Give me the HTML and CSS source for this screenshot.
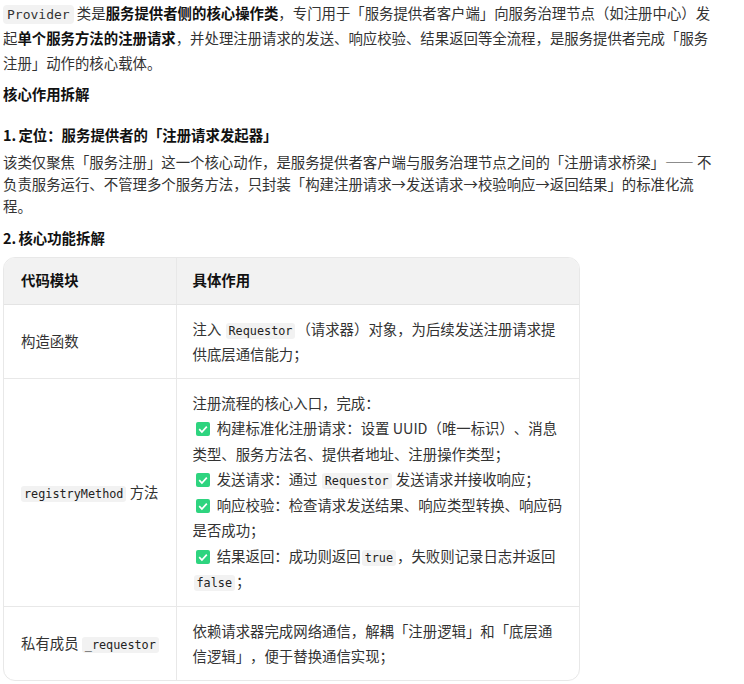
FILE: index.html
```html
<!DOCTYPE html>
<html lang="zh-CN">
<head>
<meta charset="utf-8">
<title>Provider</title>
<link rel="stylesheet" href="styles.css">
</head>
<body>
<main class="doc">
<p class="para"><code class="code-top">Provider</code> 类是<strong>服务提供者侧的核心操作类</strong>，专门用于「服务提供者客户端」向服务治理节点（如注册中心）发起<strong>单个服务方法的注册请求</strong>，并处理注册请求的发送、响应校验、结果返回等全流程，是服务提供者完成「服务注册」动作的核心载体。</p>
<h3 class="title">核心作用拆解</h3>
<h4 class="sub first">1. 定位：服务提供者的「注册请求发起器」</h4>
<p class="para tight">该类仅聚焦「服务注册」这一个核心动作，是服务提供者客户端与服务治理节点之间的「注册请求桥梁」—— 不负责服务运行、不管理多个服务方法，只封装「构建注册请求→发送请求→校验响应→返回结果」的标准化流程。</p>
<h4 class="sub second">2. 核心功能拆解</h4>
<div class="table-wrap">
<table class="table">
<thead>
<tr><th class="col-a">代码模块</th><th class="col-b">具体作用</th></tr>
</thead>
<tbody>
<tr>
<td>构造函数</td>
<td>注入 <code>Requestor</code>（请求器）对象，为后续发送注册请求提供底层通信能力；</td>
</tr>
<tr class="tall">
<td><code>registryMethod</code> 方法</td>
<td>注册流程的核心入口，完成：<br>
<svg class="check" viewBox="0 0 14 14"><rect width="14" height="14" rx="2" fill="#2ed47f"/><path d="M3.2 7.2 5.9 10 10.8 4.6" fill="none" stroke="#fff" stroke-width="1.7"/></svg> 构建标准化注册请求：设置 UUID（唯一标识）、消息类型、服务方法名、提供者地址、注册操作类型；<br>
<svg class="check" viewBox="0 0 14 14"><rect width="14" height="14" rx="2" fill="#2ed47f"/><path d="M3.2 7.2 5.9 10 10.8 4.6" fill="none" stroke="#fff" stroke-width="1.7"/></svg> 发送请求：通过 <code>Requestor</code> 发送请求并接收响应；<br>
<svg class="check" viewBox="0 0 14 14"><rect width="14" height="14" rx="2" fill="#2ed47f"/><path d="M3.2 7.2 5.9 10 10.8 4.6" fill="none" stroke="#fff" stroke-width="1.7"/></svg> 响应校验：检查请求发送结果、响应类型转换、响应码是否成功；<br>
<svg class="check" viewBox="0 0 14 14"><rect width="14" height="14" rx="2" fill="#2ed47f"/><path d="M3.2 7.2 5.9 10 10.8 4.6" fill="none" stroke="#fff" stroke-width="1.7"/></svg> 结果返回：成功则返回<code>true</code>，失败则记录日志并返回 <code>false</code>；</td>
</tr>
<tr>
<td>私有成员 <code>_requestor</code></td>
<td>依赖请求器完成网络通信，解耦「注册逻辑」和「底层通信逻辑」，便于替换通信实现；</td>
</tr>
</tbody>
</table>
</div>
</main>
</body>
</html>
```
FILE: styles.css
```css
* { box-sizing: border-box; }
html, body { margin: 0; background: #fff; overflow: hidden; }
body {
  font-family: "Noto Sans CJK SC", "Noto Sans", sans-serif;
  font-size: 14.4px;
  line-height: 25px;
  color: #333;
  text-spacing-trim: space-all;
}
.doc { width: 716px; padding: 0 0 0 3px; }
.para { margin: 0; }
.para.tight { line-height: 22px; }
.title {
  margin: 6px 0 0;
  font-size: 14.4px;
  line-height: 25px;
  font-weight: 700;
  color: #111;
}
.sub {
  margin: 0;
  font-size: 14.4px;
  line-height: 25px;
  font-weight: 700;
  color: #111;
  word-spacing: -1px;
}
.sub.first { margin-top: 16px; margin-bottom: 4px; }
.sub.second { margin-top: 8px; margin-bottom: 7px; }
strong { font-weight: 700; color: #111; }
code {
  font-family: "DejaVu Sans Mono", monospace;
  font-size: 11.8px;
  line-height: 1;
  color: #222;
  background: #f2f2f2;
  border-radius: 3px;
  padding: 1px 3px;
  margin: 0 1px;
}
.code-top { font-size: 13px; padding: 2px 4px; margin: 0; border-radius: 4px; color: #333; }
.table-wrap {
  width: 577px;
  border: 1px solid #e8e8e8;
  border-radius: 12px;
  overflow: hidden;
}
.table { width: 100%; border-collapse: collapse; table-layout: fixed; }
.col-a { width: 172px; }
th {
  background: #f2f2f2;
  height: 46px;
  padding: 0 16px 2px;
  text-align: left;
  font-weight: 700;
  color: #111;
  border-bottom: 1px solid #e4e4e4;
}
td {
  padding: 11px 16px;
  line-height: 25.5px;
  vertical-align: middle;
  border-top: 1px solid #e8e8e8;
}
.tall td { padding-bottom: 12px; }
th:first-child, td:first-child { padding-left: 17px; padding-right: 0; white-space: nowrap; }
td:first-child code { margin: 0; }
th + th, td + td { border-left: 1px solid #e8e8e8; }
tbody tr:first-child td { border-top: 0; }
.check { width: 14px; height: 14px; margin: 0 4px 0 3px; vertical-align: -2px; }
```
